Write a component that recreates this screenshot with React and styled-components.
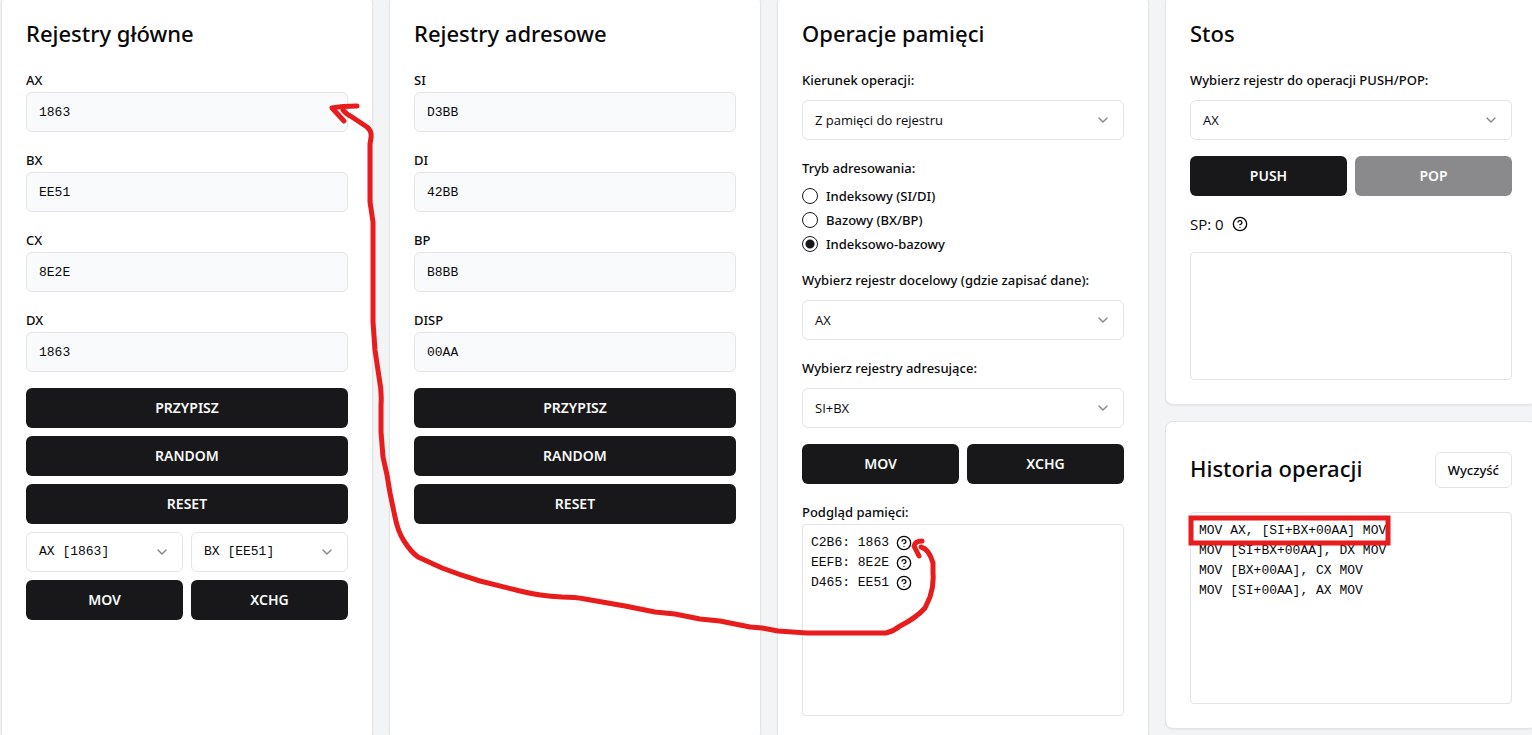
import React, { useId } from "react";
import styled, { createGlobalStyle } from "styled-components";
import { ChevronDown, CircleHelp } from "lucide-react";

const GlobalStyle = createGlobalStyle`
  *, *::before, *::after { box-sizing: border-box; }
  body {
    margin: 0;
    overflow: hidden;
    background: #f3f4f6;
    color: #09090b;
    font-family: "Noto Sans", "Open Sans", sans-serif;
    font-size: 14px;
    line-height: 24px;
  }
  button, input, select { font: inherit; color: inherit; }
`;

const mono = `font-family: Consolas, "Liberation Mono", monospace; font-size: 13px;`;
const plain = `font-family: "Open Sans", "Noto Sans", sans-serif; font-size: 13px;`;

const Page = styled.div`
  position: relative;
  display: flow-root;
  min-height: 100vh;
`;

const Board = styled.main`
  display: grid;
  grid-template-columns: repeat(4, minmax(0, 1fr));
  gap: 16px;
  margin: -5px -5px 0 1px;
`;

const Column = styled.div`
  display: flex;
  flex-direction: column;
  gap: 16px;
`;

const Card = styled.section`
  padding: 24px;
  background: #fff;
  border: 1px solid #e4e4e7;
  border-radius: 8px;
  box-shadow: 0 1px 2px rgba(0, 0, 0, 0.06);
`;

const CardHeader = styled.header`
  display: flex;
  align-items: flex-start;
  justify-content: space-between;
  margin: ${(p) => (p.$withAction ? "6px 0 24px" : "-3px 0 19px")};
`;

const Title = styled.h2`
  margin: 0;
  font-size: 22px;
  font-weight: 500;
  line-height: 32px;
`;

const Stack = styled.div`
  display: flex;
  flex-direction: column;
  gap: ${(p) => p.$gap || 16}px;
`;

const Pair = styled.div`
  display: grid;
  grid-template-columns: 1fr 1fr;
  gap: 8px;
`;

const Label = styled.label`
  padding-top: 1px;
  font-size: 13px;
  font-weight: 500;
  line-height: 23px;
`;

const Caption = styled(Label).attrs({ as: "div" })``;

const TextInput = styled.input`
  display: block;
  width: 100%;
  height: 40px;
  padding: 1px 12px 0;
  background: #f9fafb;
  border: 1px solid #e4e4e7;
  border-radius: 6px;
  ${mono}
`;

const SelectFrame = styled.div`
  position: relative;
  svg {
    position: absolute;
    right: 13px;
    top: 12px;
    color: #848486;
    pointer-events: none;
  }
`;

const NativeSelect = styled.select`
  display: block;
  width: 100%;
  height: 40px;
  padding: 0 32px 0 12px;
  appearance: none;
  background: #fff;
  border: 1px solid #e4e4e7;
  border-radius: 6px;
  ${(p) => (p.$mono ? mono : plain)}
`;

const Button = styled.button`
  height: 40px;
  padding: 0 16px;
  background: #18181b;
  color: #fafafa;
  border: 0;
  border-radius: 6px;
  font-size: 14px;
  font-weight: 600;
  &:disabled { opacity: 0.5; }
`;

const OutlineButton = styled.button`
  height: 36px;
  padding: 0 12px;
  background: #fff;
  border: 1px solid #e4e4e7;
  border-radius: 6px;
  font-size: 13px;
  font-weight: 500;
`;

const RadioGroup = styled.fieldset`
  display: flex;
  flex-direction: column;
  gap: 8px;
  margin: 0;
  padding: 0;
  border: 0;
  legend {
    padding: 1px 0 0;
    margin-bottom: 8px;
    font-size: 13px;
    font-weight: 500;
    line-height: 23px;
  }
`;

const RadioLabel = styled.label`
  display: flex;
  align-items: center;
  gap: 8px;
  font-size: 13px;
  font-weight: 500;
  line-height: 16px;
`;

const Radio = styled.input`
  appearance: none;
  width: 16px;
  height: 16px;
  margin: 0;
  border: 1px solid #18181b;
  border-radius: 50%;
  &:checked { background: radial-gradient(circle, #18181b 0 4px, transparent 5px); }
`;

const Pane = styled.div`
  height: ${(p) => p.$height}px;
  padding: 8px;
  border: 1px solid #e4e4e7;
  border-radius: 4px;
  line-height: 20px;
  white-space: pre;
  ${mono}
`;

const PaneRow = styled.div`
  display: flex;
  align-items: center;
  gap: 7px;
  height: 20px;
`;

const StackPointer = styled.div`
  display: flex;
  align-items: center;
  gap: 8px;
  ${plain}
  font-size: 15px;
`;

const Annotations = styled.svg`
  position: absolute;
  top: 0;
  left: 0;
  pointer-events: none;
  fill: none;
  stroke: #e81c1c;
  stroke-width: 5;
  stroke-linecap: round;
  stroke-linejoin: round;
`;

function Register({ name, value }) {
  const id = useId();
  return (
    <Stack $gap="0">
      <Label htmlFor={id}>{name}</Label>
      <TextInput id={id} defaultValue={value} />
    </Stack>
  );
}

function Select({ value, ...rest }) {
  return (
    <SelectFrame>
      <NativeSelect defaultValue={value} {...rest}>
        <option>{value}</option>
      </NativeSelect>
      <ChevronDown size={16} strokeWidth={2} />
    </SelectFrame>
  );
}

function LabeledSelect({ label, value }) {
  const id = useId();
  return (
    <Stack $gap={8}>
      <Label htmlFor={id}>{label}</Label>
      <Select id={id} value={value} />
    </Stack>
  );
}

function RegisterCard({ title, registers, children }) {
  return (
    <Card>
      <CardHeader><Title>{title}</Title></CardHeader>
      <Stack>
        {registers.map(([name, value]) => (
          <Register key={name} name={name} value={value} />
        ))}
        <Stack $gap={8}>
          <Button>PRZYPISZ</Button>
          <Button>RANDOM</Button>
          <Button>RESET</Button>
          {children}
        </Stack>
      </Stack>
    </Card>
  );
}

const mainRegisters = [["AX", "1863"], ["BX", "EE51"], ["CX", "8E2E"], ["DX", "1863"]];
const addressRegisters = [["SI", "D3BB"], ["DI", "42BB"], ["BP", "B8BB"], ["DISP", "00AA"]];
const modes = ["Indeksowy (SI/DI)", "Bazowy (BX/BP)", "Indeksowo-bazowy"];
const memory = ["C2B6: 1863", "EEFB: 8E2E", "D465: EE51"];
const history = [
  "MOV AX, [SI+BX+00AA] MOV",
  "MOV [SI+BX+00AA], DX MOV",
  "MOV [BX+00AA], CX MOV",
  "MOV [SI+00AA], AX MOV",
];

export default function App() {
  return (
    <Page>
      <GlobalStyle />
      <Board>
        <RegisterCard title="Rejestry główne" registers={mainRegisters}>
          <Pair>
            <Select $mono aria-label="Rejestr 1" value="AX [1863]" />
            <Select $mono aria-label="Rejestr 2" value="BX [EE51]" />
          </Pair>
          <Pair>
            <Button>MOV</Button>
            <Button>XCHG</Button>
          </Pair>
        </RegisterCard>

        <RegisterCard title="Rejestry adresowe" registers={addressRegisters} />

        <Card>
          <CardHeader><Title>Operacje pamięci</Title></CardHeader>
          <Stack>
            <LabeledSelect label="Kierunek operacji:" value="Z pamięci do rejestru" />
            <RadioGroup>
              <legend>Tryb adresowania:</legend>
              {modes.map((mode, i) => (
                <RadioLabel key={mode}>
                  <Radio type="radio" name="mode" defaultChecked={i === 2} />
                  {mode}
                </RadioLabel>
              ))}
            </RadioGroup>
            <LabeledSelect label="Wybierz rejestr docelowy (gdzie zapisać dane):" value="AX" />
            <LabeledSelect label="Wybierz rejestry adresujące:" value="SI+BX" />
            <Pair>
              <Button>MOV</Button>
              <Button>XCHG</Button>
            </Pair>
            <div>
              <Caption>Podgląd pamięci:</Caption>
              <Pane $height={192}>
                {memory.map((cell) => (
                  <PaneRow key={cell}>{cell}<CircleHelp size={16} /></PaneRow>
                ))}
              </Pane>
            </div>
          </Stack>
        </Card>

        <Column>
          <Card>
            <CardHeader><Title>Stos</Title></CardHeader>
            <Stack>
              <LabeledSelect label="Wybierz rejestr do operacji PUSH/POP:" value="AX" />
              <Pair>
                <Button>PUSH</Button>
                <Button disabled>POP</Button>
              </Pair>
              <StackPointer>SP: 0<CircleHelp size={16} /></StackPointer>
              <Pane $height={128} />
            </Stack>
          </Card>
          <Card>
            <CardHeader $withAction>
              <Title>Historia operacji</Title>
              <OutlineButton>Wyczyść</OutlineButton>
            </CardHeader>
            <Pane $height={192}>
              {history.map((line) => <PaneRow key={line}>{line}</PaneRow>)}
            </Pane>
          </Card>
        </Column>
      </Board>

      <Annotations width="1532" height="735" aria-hidden="true">
        <path d="M357 106 Q342 106 332 108 L344 121" />
        <path d="M343 110 Q346 114 352 117 L367 127 Q372 131 371 138 L370 144 V202 L373 222 V322 L375 350 L379 377 Q382 392 381 405 V432 L383 457 L387 475 L390 493 L395 517 Q398 532 404 541 Q411 552 418 557 L442 568 Q460 575 480 581 L520 591 Q540 596 562 597 Q575 597 585 599 L625 606 L655 612 L675 614 L700 619 L720 621 L750 627 L762 628 L778 631 L807 633 H886 Q894 631 900 626 Q916 618 925 608 L930 597 Q934 585 933 573 V563 Q929 549 921 547" />
        <path d="M922 541 Q915 541 914 546 L919 556" />
        <rect x="1191" y="518" width="197" height="25" strokeLinejoin="miter" />
      </Annotations>
    </Page>
  );
}
